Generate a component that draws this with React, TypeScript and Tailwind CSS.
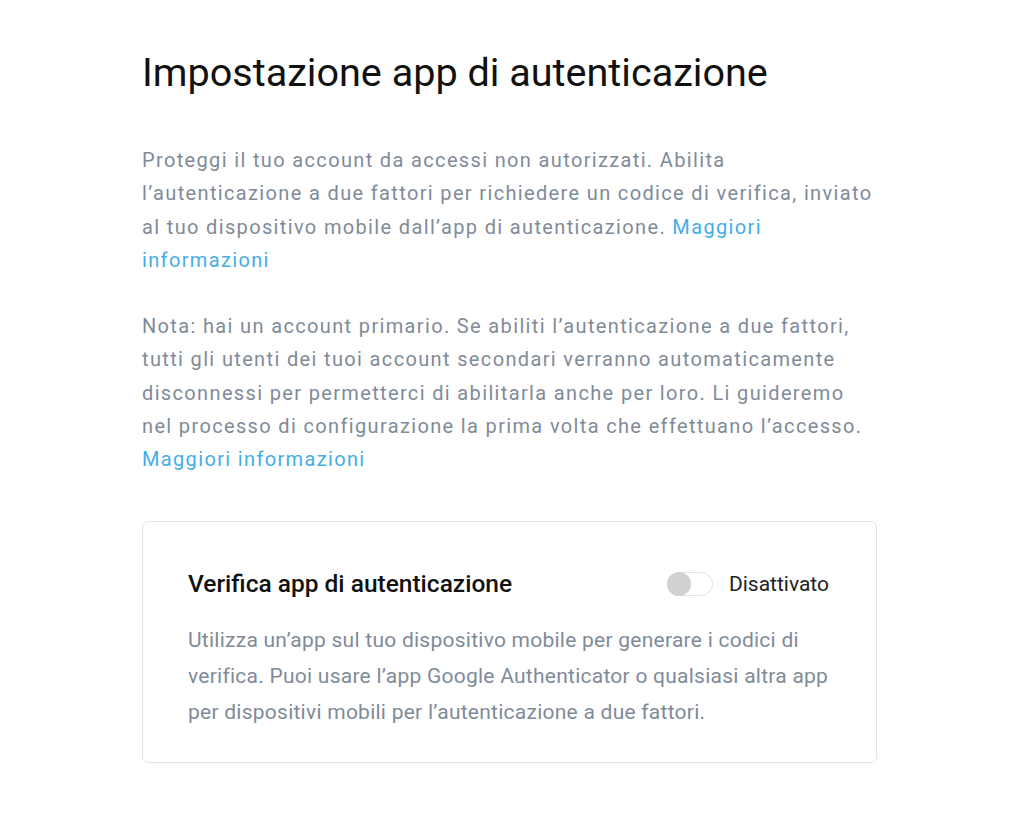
export default function App() {
  return (
    <div className="min-h-[818px] w-full bg-white" style={{ fontFamily: 'Roboto, "Liberation Sans", sans-serif' }}>
      <div className="ml-[142px] w-[735px] pt-[49px]">
        <h1 className="text-[39.6px] leading-[48px] font-normal text-[#111]">Impostazione app di autenticazione</h1>

        <p className="mt-[47px] text-[20px] leading-[33.3px] tracking-[1.35px] text-[#7f8b99]">
          Proteggi il tuo account da accessi non autorizzati. Abilita l’autenticazione a due fattori per richiedere un codice di verifica, inviato al tuo dispositivo mobile dall’app di autenticazione.{' '}
          <a className="text-[#45ade6]">Maggiori informazioni</a>
        </p>

        <p className="mt-[33px] text-[20px] leading-[33.3px] tracking-[1.35px] text-[#7f8b99]">
          Nota: hai un account primario. Se abiliti l’autenticazione a due fattori, tutti gli utenti dei tuoi account secondari verranno automaticamente disconnessi per permetterci di abilitarla anche per loro. Li guideremo nel processo di configurazione la prima volta che effettuano l’accesso.{' '}
          <a className="text-[#45ade6]">Maggiori informazioni</a>
        </p>

        <div className="mt-[44px] rounded-[6px] border border-[#e3e3e3] px-[45px] pt-[47px] pb-[32px]">
          <div className="flex items-center justify-between">
            <h2 className="text-[24.5px] leading-[30px] font-medium text-[#111]">Verifica app di autenticazione</h2>
            <div className="flex items-center gap-[16px] pr-[2px]">
              <div className="relative h-[24px] w-[46px] rounded-full border border-[#e4e4e4] bg-white">
                <div className="absolute -left-px -top-px h-[24px] w-[24px] rounded-full bg-[#d1d1d1]" />
              </div>
              <span className="text-[21px] leading-[28px] text-[#222]">Disattivato</span>
            </div>
          </div>
          <p className="mt-[23px] text-[21px] leading-[36px] tracking-[0.25px] text-[#7f8b99]">
            Utilizza un’app sul tuo dispositivo mobile per generare i codici di verifica. Puoi usare l’app Google Authenticator o qualsiasi altra app per dispositivi mobili per l’autenticazione a due fattori.
          </p>
        </div>
      </div>
    </div>
  );
}
